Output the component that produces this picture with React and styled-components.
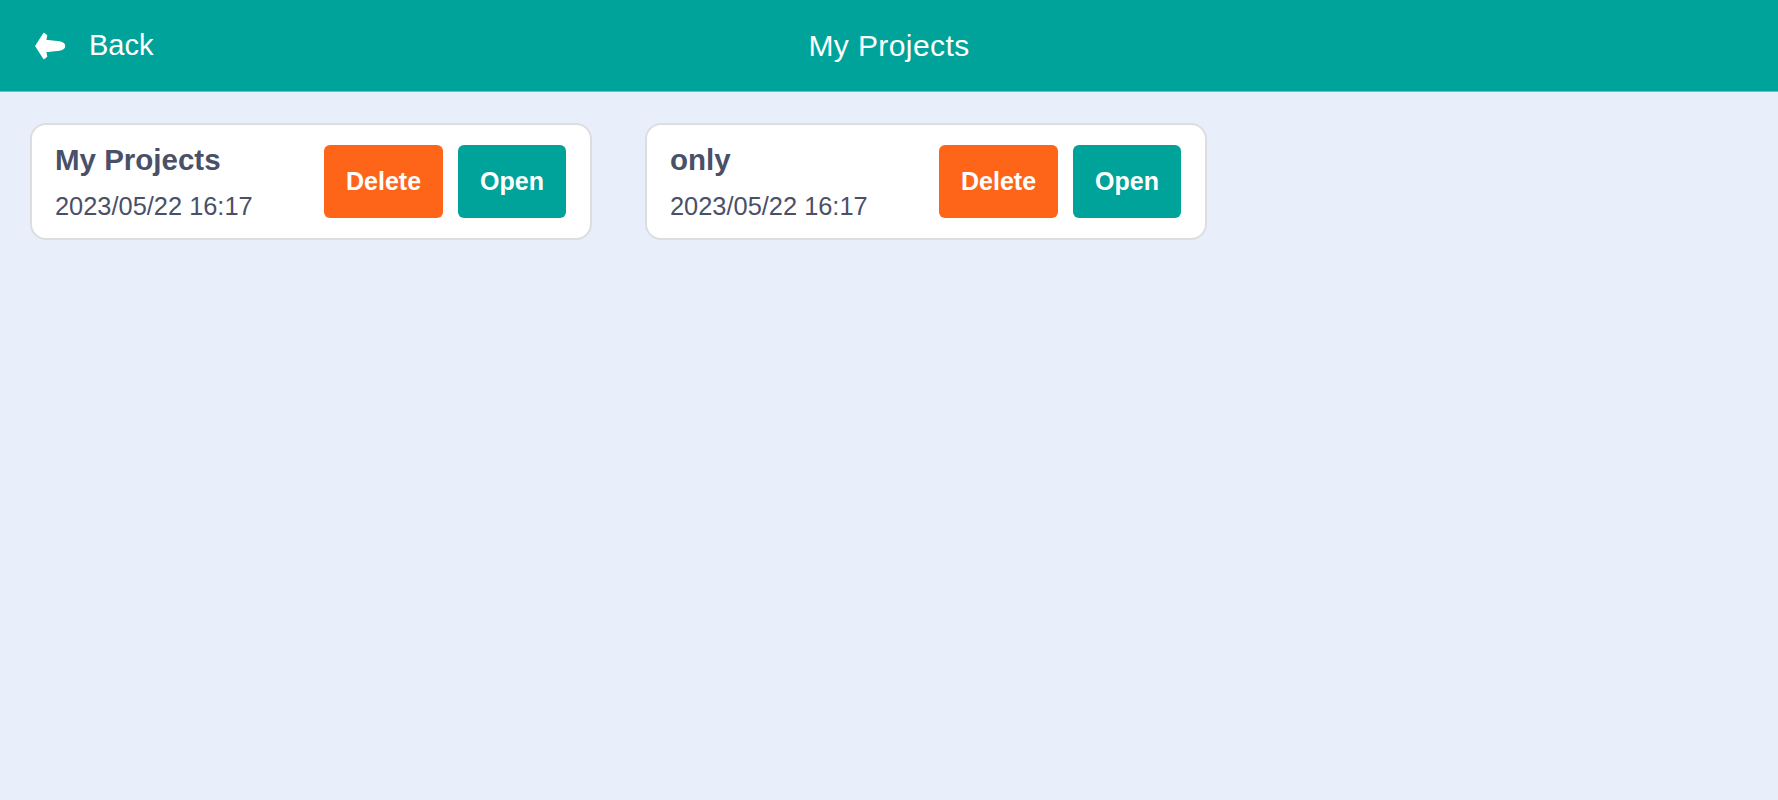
import React from 'react'
import styled, { createGlobalStyle } from 'styled-components'

const GlobalStyle = createGlobalStyle`
  html, body {
    margin: 0;
    padding: 0;
    background: #e8effa;
    font-family: "Liberation Sans", Arial, sans-serif;
  }
  * { box-sizing: border-box; }
`

const projects = [
  { id: 1, name: 'My Projects', date: '2023/05/22 16:17' },
  { id: 2, name: 'only', date: '2023/05/22 16:17' },
]

const BackArrow = () => (
  <svg width="31" height="28" viewBox="0 0 31 28">
    <path
      d="M1 14 L9 1.5 L11.5 3.5 L10.5 8.5 L24.5 10 Q29.5 11 29.5 14 Q29.5 17 24.5 18 L10.5 19.5 L11.5 24.5 L9 26.5 Z"
      fill="#fff"
      stroke="#fff"
      strokeWidth="1.5"
      strokeLinejoin="round"
    />
  </svg>
)

const App = () => {
  return (
    <Wrapper>
      <GlobalStyle />
      <Header>
        <BackButton>
          <BackArrow />
          <span>Back</span>
        </BackButton>
        <HeaderTitle>My Projects</HeaderTitle>
        <div />
      </Header>
      <ProjectList>
        {projects.map((p) => (
          <Card key={p.id}>
            <Info>
              <Title>{p.name}</Title>
              <DateText>{p.date}</DateText>
            </Info>
            <Actions>
              <ActionButton $variant="delete">Delete</ActionButton>
              <ActionButton $variant="open">Open</ActionButton>
            </Actions>
          </Card>
        ))}
      </ProjectList>
    </Wrapper>
  )
}

const Wrapper = styled.div`
  min-height: 100vh;
  background: #e8effa;
`

const Header = styled.header`
  height: 92px;
  background: #00a39a;
  border-bottom: 1px solid #5cc6c0;
  display: grid;
  grid-template-columns: 1fr auto 1fr;
  align-items: center;
  color: #fff;
`

const BackButton = styled.div`
  display: flex;
  align-items: center;
  gap: 23px;
  padding-left: 35px;
  font-size: 29px;
  cursor: pointer;
  span {
    line-height: 1;
  }
`

const HeaderTitle = styled.h1`
  margin: 0;
  font-size: 30px;
  letter-spacing: 0.4px;
  font-weight: normal;
`

const ProjectList = styled.div`
  display: flex;
  flex-wrap: wrap;
  gap: 53px;
  padding: 31px 30px;
`

const Card = styled.div`
  width: 562px;
  height: 117px;
  background: #fff;
  border: 2px solid #dcdde0;
  border-radius: 16px;
  padding: 0 24px 0 23px;
  display: flex;
  align-items: center;
  justify-content: space-between;
`

const Info = styled.div`
  display: flex;
  flex-direction: column;
  gap: 14px;
  color: #4a5068;
`

const Title = styled.div`
  font-size: 29.5px;
  line-height: 34px;
  font-weight: bold;
`

const DateText = styled.div`
  font-size: 25.4px;
  line-height: 30px;
`

const Actions = styled.div`
  display: flex;
  gap: 15px;
`

const ActionButton = styled.button`
  height: 73px;
  padding: 0 22px;
  border: none;
  border-radius: 6px;
  color: #fff;
  font-family: "Liberation Sans", Arial, sans-serif;
  font-size: 25px;
  font-weight: bold;
  cursor: pointer;
  background-color: ${(p) => (p.$variant === 'delete' ? '#ff6519' : '#00a39a')};
`

export default App
